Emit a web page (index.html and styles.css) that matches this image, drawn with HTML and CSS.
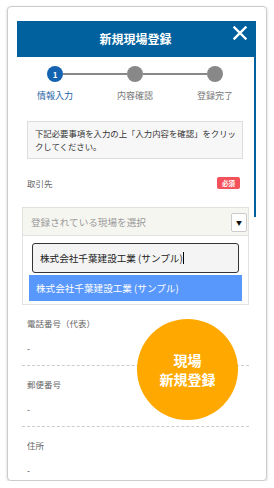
FILE: index.html
```html
<!DOCTYPE html>
<html lang="ja">
<head>
  <meta charset="UTF-8">
  <meta name="viewport" content="width=device-width, initial-scale=1.0">
  <title>新規現場登録</title>
  <link rel="stylesheet" href="styles.css">
</head>
<body>
  <div class="card">
    <div class="modal">
      <div class="modal-main">
        <header class="modal-head">
          <span></span>
          <h1 class="modal-title">新規現場登録</h1>
          <svg class="close" width="14" height="14" viewBox="0 0 14 14">
            <path d="M1.5 1.5 L12.5 12.5 M12.5 1.5 L1.5 12.5" stroke="#fff" stroke-width="2.4" stroke-linecap="square"/>
          </svg>
        </header>
        <div class="modal-body">
          <div class="stepper-track">
            <div class="step-dot active">1</div>
            <div class="step-line"></div>
            <div class="step-dot"></div>
            <div class="step-line"></div>
            <div class="step-dot"></div>
          </div>
          <div class="stepper-labels">
            <span class="active">情報入力</span>
            <span>内容確認</span>
            <span>登録完了</span>
          </div>
          <div class="notice">下記必要事項を入力の上「入力内容を確認」をクリックしてください。</div>
          <div class="label-row">
            <span>取引先</span>
            <span class="badge">必須</span>
          </div>
          <div class="select">
            <span class="placeholder">登録されている現場を選択</span>
            <span class="arrow">▼</span>
          </div>
          <div class="dropdown">
            <div class="search">株式会社千葉建設工業 (サンプル)<span class="caret"></span></div>
            <div class="option">株式会社千葉建設工業 (サンプル)</div>
          </div>
          <div class="field">
            <div class="field-label">電話番号（代表）</div>
            <div class="field-value">-</div>
          </div>
          <div class="field">
            <div class="field-label">郵便番号</div>
            <div class="field-value">-</div>
          </div>
          <div class="field">
            <div class="field-label">住所</div>
            <div class="field-value">-</div>
          </div>
        </div>
      </div>
      <div class="scrollbar"><div class="thumb"></div></div>
    </div>
    <div class="fab">現場<br>新規登録</div>
  </div>
</body>
</html>
```

FILE: styles.css
```css
* { margin: 0; padding: 0; box-sizing: border-box; }
body {
  font-family: "Noto Sans CJK JP", "Noto Sans", sans-serif;
  background: #fff;
  color: #333;
}
.card {
  position: relative;
  margin: 6px 0 0 7px;
  width: 260px;
  height: 475px;
  border: 1px solid #ccc;
  border-radius: 4px;
  box-shadow: 0 1px 3px rgba(0,0,0,0.18);
  padding: 14px 10px 0 9px;
  overflow: hidden;
  background: #fff;
}
.modal { display: flex; }
.modal-main { width: 237px; }
.scrollbar { width: 2px; }
.thumb { height: 196px; background: #00619e; }
.modal-head {
  height: 36px;
  background: #00619e;
  display: grid;
  grid-template-columns: 1fr auto 1fr;
  align-items: center;
}
.modal-title {
  color: #fff;
  font-size: 12px;
  font-weight: bold;
  line-height: 16px;
}
.close {
  justify-self: end;
  align-self: start;
  margin: 5px 7px 0 0;
}
.modal-body { padding: 0 5px; }
.stepper-track {
  margin: 9px 0 0 25px;
  width: 176px;
  height: 16px;
  display: flex;
  align-items: center;
}
.step-dot {
  flex: none;
  width: 16px;
  height: 16px;
  border-radius: 50%;
  background: #888;
  color: #fff;
  font-size: 8px;
  font-weight: bold;
  display: flex;
  justify-content: center;
  align-items: center;
}
.step-dot.active { background: #1463b1; }
.step-line { flex: 1; height: 2px; background: #888; }
.stepper-labels {
  margin: 8px 0 0 -7px;
  display: grid;
  grid-template-columns: repeat(3, 80px);
  font-size: 9px;
  line-height: 12px;
  color: #777;
  text-align: center;
}
.stepper-labels .active { color: #1d5fa6; }
.notice {
  margin: 19px 6px 0 5px;
  padding: 5px 4px 5px 7px;
  border: 1px solid #ddd;
  background: #f7f7f7;
  font-size: 8.4px;
  line-height: 13px;
  color: #333;
}
.label-row {
  margin-top: 14px;
  height: 20px;
  padding: 0 9px 0 5px;
  display: flex;
  justify-content: space-between;
  align-items: center;
  font-size: 8.5px;
  color: #666;
}
.badge {
  width: 23px;
  height: 12px;
  border-radius: 2px;
  background: #f4525a;
  color: #fff;
  font-size: 6.5px;
  font-weight: bold;
  display: flex;
  justify-content: center;
  align-items: center;
}
.select {
  margin-top: 14px;
  height: 28px;
  border: 1px solid #e2e2dc;
  border-bottom: none;
  background: #f6f6f1;
  display: flex;
  justify-content: space-between;
  padding: 0 1px 0 8px;
}
.placeholder {
  align-self: center;
  font-size: 9.6px;
  color: #999;
}
.arrow {
  margin-top: 5px;
  width: 16px;
  height: 19px;
  border: 1px solid #ccc;
  border-radius: 2px;
  background: #fff;
  font-size: 6px;
  color: #111;
  display: flex;
  justify-content: center;
  align-items: center;
}
.dropdown {
  border: 1px solid #e2e2e2;
  padding: 7px 6px 3px;
  background: #fff;
}
.search {
  margin: 0 3px;
  height: 30px;
  border: 1px solid #333;
  border-radius: 3px;
  background: #f4f4f4;
  padding-left: 7px;
  display: flex;
  align-items: center;
  font-size: 9.6px;
  color: #222;
}
.caret {
  width: 1px;
  height: 12px;
  background: #000;
}
.option {
  margin-top: 2px;
  height: 26px;
  background: #5897fb;
  color: #fff;
  padding-left: 7px;
  display: flex;
  align-items: center;
  font-size: 9.6px;
}
.field {
  padding: 8px 0 7px 5px;
  border-bottom: 1px dashed #ccc;
}
.field:first-of-type { padding-top: 4px; }
.field-label {
  line-height: 20px;
  font-size: 8.5px;
  color: #666;
}
.field-value {
  margin-top: 5px;
  line-height: 20px;
  font-size: 8.5px;
  color: #444;
}
.fab {
  position: absolute;
  left: 129px;
  top: 312px;
  width: 101px;
  height: 101px;
  border-radius: 50%;
  background: #ffa900;
  color: #fff;
  font-size: 14px;
  font-weight: bold;
  line-height: 19px;
  text-align: center;
  display: flex;
  align-items: center;
  justify-content: center;
}
```
